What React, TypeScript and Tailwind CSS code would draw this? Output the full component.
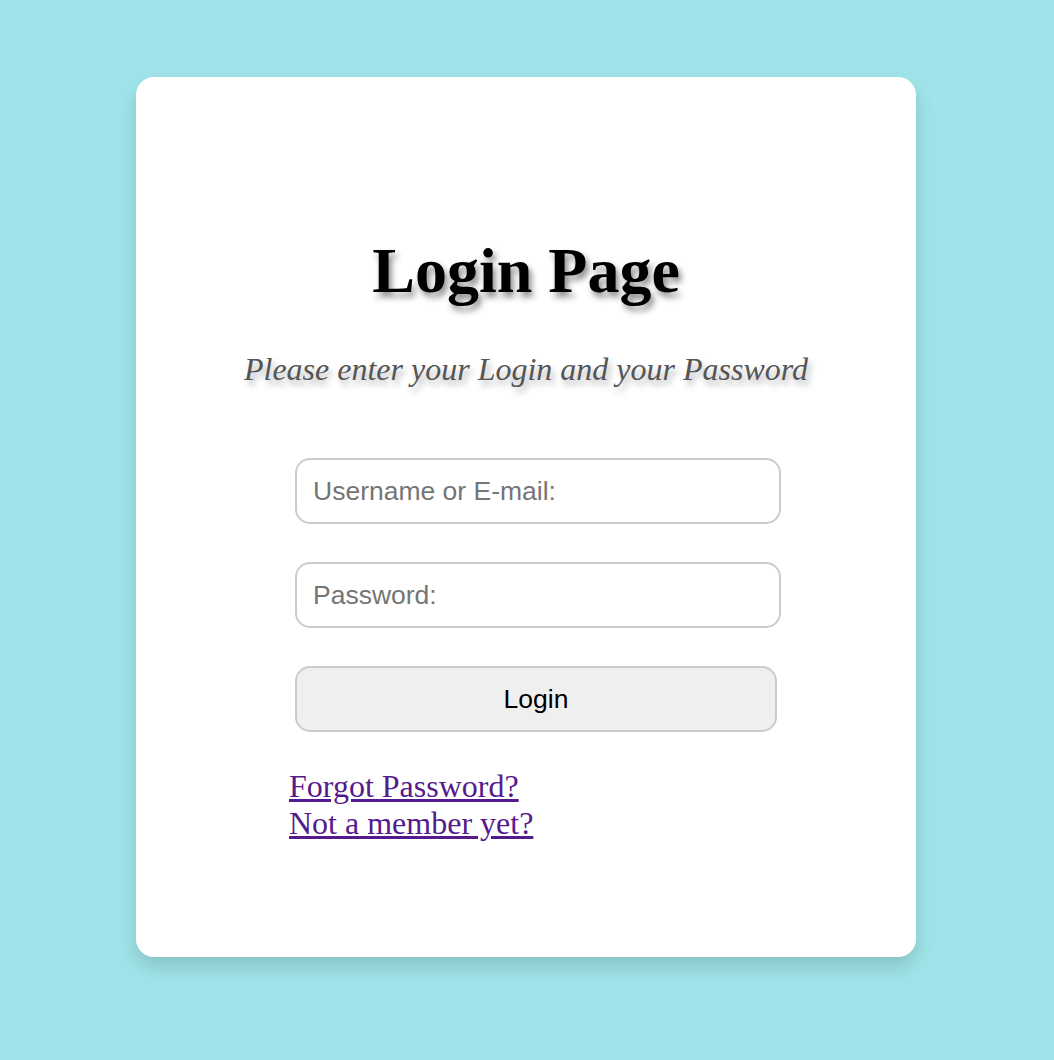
const App = () => {
  return (
    <div className="min-h-screen bg-[#a0e4e9] pt-[77px] pb-[103px]">
      {/* Card */}
      <div className="ml-[136px] w-[780px] h-[880px] rounded-[18px] bg-white pt-[157px] shadow-[0_10px_20px_rgba(0,0,0,0.15)]">
        <h1
          className="text-center text-[64px] font-bold leading-[1.15] text-black [text-shadow:3px_5px_6px_rgba(0,0,0,0.45)]"
          style={{ fontFamily: '"Liberation Serif", "Times New Roman", serif' }}
        >
          Login Page
        </h1>
        <p
          className="mt-[43px] text-center text-[32px] italic leading-[1.15] text-[#555] [text-shadow:3px_5px_6px_rgba(0,0,0,0.3)]"
          style={{ fontFamily: '"Liberation Serif", "Times New Roman", serif' }}
        >
          Please enter your Login and your Password
        </p>

        {/* Form */}
        <form
          className="ml-[159px] mt-[71px] flex flex-col gap-[38px]"
          style={{ fontFamily: '"Liberation Sans", Arial, sans-serif' }}
          onSubmit={(e) => e.preventDefault()}
        >
          <input
            type="text"
            placeholder="Username or E-mail:"
            className="h-[66px] w-[486px] rounded-[15px] border-2 border-[#ccc] bg-white px-4 text-[26.5px] text-black outline-none placeholder:text-[#757575]"
          />
          <input
            type="password"
            placeholder="Password:"
            className="h-[66px] w-[486px] rounded-[15px] border-2 border-[#ccc] bg-white px-4 text-[26.5px] text-black outline-none placeholder:text-[#757575]"
          />
          <button
            type="submit"
            className="h-[66px] w-[482px] rounded-[15px] border-2 border-[#ccc] bg-[#efefef] text-[26.5px] text-black"
          >
            Login
          </button>
        </form>

        {/* Links */}
        <div
          className="ml-[153px] mt-[36px] text-[32px] leading-[1.15]"
          style={{ fontFamily: '"Liberation Serif", "Times New Roman", serif' }}
        >
          <a href="#" className="block w-fit text-[#551a8b] underline">
            Forgot Password?
          </a>
          <a href="#" className="block w-fit text-[#551a8b] underline">
            Not a member yet?
          </a>
        </div>
      </div>
    </div>
  );
};

export default App;
